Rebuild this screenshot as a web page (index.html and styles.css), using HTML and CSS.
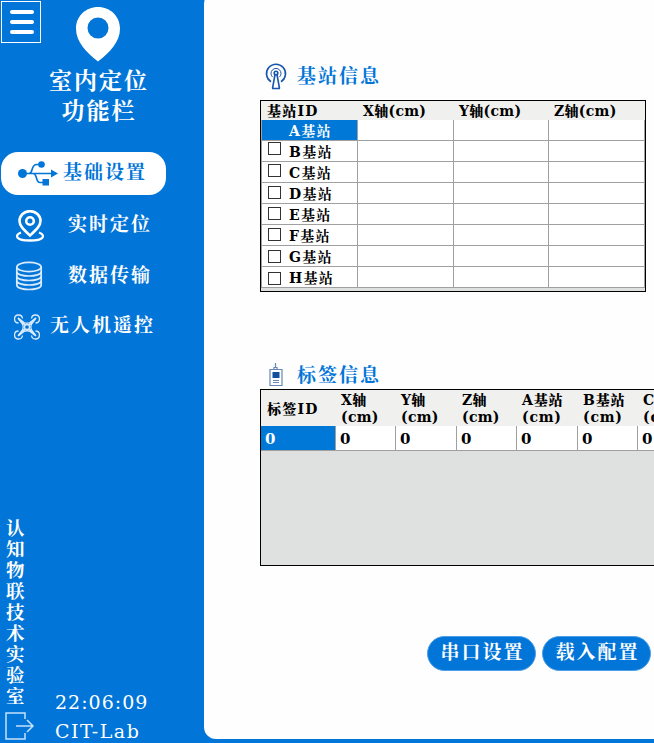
FILE: index.html
```html
<!DOCTYPE html>
<html lang="zh-CN">
<head>
<meta charset="utf-8">
<title>室内定位</title>
<link rel="stylesheet" href="styles.css">
</head>
<body>
<div class="app">
  <aside class="sidebar">
    <button class="menu" aria-label="菜单"><i></i><i></i><i></i></button>
    <svg class="pin" width="44" height="55" viewBox="0 0 44 55"><path fill="#fff" fill-rule="evenodd" d="M22 0C9.500 0 0 9.500 0 21.500C0 35 10 45 22 54.500C34 45 44 35 44 21.500C44 9.500 34.500 0 22 0ZM22 10.500a10.500 10.500 0 1 1 0 21a10.500 10.500 0 1 1 0-21Z"/></svg>
    <h1 class="brand"><span>室内定位</span><span>功能栏</span></h1>
    <nav class="nav">
      <a class="item active">
        <svg width="40" height="26" viewBox="0 0 40 26" fill="none" stroke="#0275d8" stroke-width="1.700"><path d="M4 12.500H34M11 12.500C16 12 12 3.500 19 3.500H23M15 12.500C20 13 17 21.500 22 21.500H26"/><g fill="#0275d8" stroke="none"><circle cx="4.500" cy="12.500" r="4.500"/><circle cx="23.500" cy="3.500" r="3.300"/><path d="M33 8.500L40 12.500L33 16.500ZM24.500 18h6.500v6.500h-6.500Z"/></g></svg>
        <span>基础设置</span>
      </a>
      <a class="item locate">
        <svg width="30" height="34" viewBox="0 0 30 34" fill="none" stroke="#fff" stroke-width="2.600"><path d="M15 25.500C9 20 4.500 16 4.500 11a10.300 9.700 0 0 1 21 0C25.500 16 21 20 15 25.500Z"/><circle cx="15" cy="11" r="3.800"/><path stroke-width="2.300" d="M6 22.500C-1 25 .5 30.500 15 30.500S31 25 24 22.500"/></svg>
        <span>实时定位</span>
      </a>
      <a class="item data">
        <svg width="28" height="30" viewBox="0 0 28 30" fill="none" stroke="#d9ebff" stroke-width="1.700"><ellipse cx="14" cy="6" rx="12.200" ry="4.700"/><path d="M1.800 6V24C1.800 30 26.200 30 26.200 24V6M1.800 10.500C1.800 16.500 26.200 16.500 26.200 10.500M1.800 15C1.800 21 26.200 21 26.200 15M1.800 19.500C1.800 25.500 26.200 25.500 26.200 19.500"/></svg>
        <span>数据传输</span>
      </a>
      <a class="item drone">
        <svg width="26" height="26" viewBox="0 0 26 26" fill="none" stroke="#d9ebff" stroke-width="1.300"><path d="M8.500 4.500A4 4 0 1 0 4.500 9M17.500 4.500A4 4 0 1 1 21.500 9M8.500 21.500A4 4 0 1 1 4.500 17M17.500 21.500A4 4 0 1 0 21.500 17"/><path d="M4 4L10 8.500Q13 10 16 8.500L22 4L17.500 10Q16 13 17.500 16L22 22L16 17.500Q13 16 10 17.500L4 22L8.500 16Q10 13 8.500 10Z"/><path stroke-width="2" d="M5 5L11 11M21 5L15 11M5 21L11 15M21 21L15 15"/><circle cx="13" cy="13" r="2.500"/></svg>
        <span>无人机遥控</span>
      </a>
    </nav>
    <footer class="foot">
      <div class="rail">
        <div class="lab">认知物联技术实验室</div>
        <svg width="30" height="28" viewBox="0 0 30 28" fill="none" stroke="#c5e1fb" stroke-width="1.500"><path d="M20 7V1H1V27H20V21M11 14H28M22 8L28 14L22 20"/></svg>
      </div>
      <div class="status"><div>22:06:09</div><div class="cit">CIT-Lab</div></div>
    </footer>
  </aside>
  <main class="content">
    <section class="stations">
      <h2>
        <svg width="22" height="27" viewBox="0 0 22 27" fill="none" stroke="#1756ad" stroke-width="1.600"><path d="M6 18.800A9.500 9.500 0 1 1 16 18.800M10 11.500L7.500 25.500M12 11.500L14.500 25.500M7 25.500H15"/><path stroke-width="1" d="M7.500 14A5 5 0 1 1 14.500 14"/><circle cx="11" cy="10" r="1.800"/></svg>
        <span>基站信息</span>
      </h2>
      <div class="grid">
        <div class="row head"><b class="id">基站ID</b><b>X轴(cm)</b><b>Y轴(cm)</b><b>Z轴(cm)</b></div>
        <div class="row"><div class="name selected">A基站</div><div></div><div></div><div></div></div>
        <div class="row"><div class="name"><i></i>B基站</div><div></div><div></div><div></div></div>
        <div class="row"><div class="name"><i></i>C基站</div><div></div><div></div><div></div></div>
        <div class="row"><div class="name"><i></i>D基站</div><div></div><div></div><div></div></div>
        <div class="row"><div class="name"><i></i>E基站</div><div></div><div></div><div></div></div>
        <div class="row"><div class="name"><i></i>F基站</div><div></div><div></div><div></div></div>
        <div class="row"><div class="name"><i></i>G基站</div><div></div><div></div><div></div></div>
        <div class="row"><div class="name"><i></i>H基站</div><div></div><div></div><div></div></div>
      </div>
    </section>
    <section class="tags">
      <h2>
        <svg width="22" height="24" viewBox="0 0 22 24" fill="none" stroke="#6687b8" stroke-width="1.200"><path d="M5 6.500H17V22.500H5ZM9 6V4.500H12V6M10.500 4.500V0"/><path fill="#104e9e" stroke="none" d="M7.500 9h7v6h-7Z"/><path d="M8 17.500h6M8 19.500h6"/></svg>
        <span>标签信息</span>
      </h2>
      <div class="grid">
        <div class="row head"><b class="id">标签ID</b><b>X轴<br>(cm)</b><b>Y轴<br>(cm)</b><b>Z轴<br>(cm)</b><b>A基站<br>(cm)</b><b>B基站<br>(cm)</b><b>C基站<br>(cm)</b></div>
        <div class="row"><div class="selected">0</div><div>0</div><div>0</div><div>0</div><div>0</div><div>0</div><div>0</div></div>
      </div>
    </section>
    <div class="actions"><button>串口设置</button><button>载入配置</button></div>
  </main>
</div>
</body>
</html>
```

FILE: styles.css
```css
* { box-sizing: border-box; }
body { margin: 0; overflow: hidden; font-family: "DejaVu Serif", "Noto Serif CJK SC", "Noto Sans CJK SC", serif; }
button { border: 0; padding: 0; font: inherit; }
h1, h2 { margin: 0; }
svg { display: block; flex: none; }
.app { display: flex; width: 654px; height: 743px; background: #0275d8; overflow: hidden; }

.sidebar { width: 204px; flex: none; display: flex; flex-direction: column; color: #fff; }
.menu { width: 40px; height: 42px; margin: 1px 0 0 1px; border: 1px solid #fff; background: none; display: flex; flex-direction: column; gap: 6px; padding: 8px 0 0 8px; }
.menu i { width: 24px; height: 4px; border-radius: 2px; background: #fff; }
.pin { margin: -36px 0 0 76px; }
.brand { width: 198px; margin-top: 4px; font-size: 23px; line-height: 30px; font-weight: 700; letter-spacing: 2px; text-align: center; display: flex; flex-direction: column; }
.nav { margin-top: 26px; }
.item { height: 51px; display: flex; align-items: center; font-size: 19px; font-weight: 700; letter-spacing: 2px; line-height: 28px; white-space: nowrap; }
.item.active { width: 165px; height: 43px; margin-left: 1px; border-radius: 17px; background: #fff; color: #0275d8; padding-left: 17px; gap: 5px; }
.item.active span { margin-top: -4px; }
.locate { margin-top: 3px; padding-left: 15px; gap: 23px; }
.locate svg { margin-top: 7px; }
.data { padding-left: 15px; gap: 25px; }
.data svg { margin-top: 3px; }
.item.drone { height: 50px; padding-left: 14px; gap: 10px; }
.drone svg { margin-top: 3px; }
.foot { margin-top: auto; display: flex; align-items: flex-end; }
.rail { width: 55px; padding: 0 0 3px 5px; }
.lab { width: 20px; padding-left: 1px; font-size: 18.500px; line-height: 21px; font-weight: 700; word-break: break-all; margin-bottom: 5px; }
.status { font-size: 19px; line-height: 29px; letter-spacing: 1px; margin-bottom: -3px; white-space: nowrap; }
.cit { letter-spacing: 1.500px; }

.content { flex: 1; min-width: 0; height: 747px; margin-top: -8px; padding: 68px 0 0 56px; background: #fefefe; border-radius: 12px 0 0 12px; overflow: hidden; }
h2 { height: 32px; display: flex; align-items: center; gap: 10px; padding-left: 5px; color: #0275d8; font-size: 19px; line-height: 28px; letter-spacing: 2px; }
.grid { border: 1px solid #000; background: #dfe1e0; font-size: 14px; font-weight: 700; color: #000; }
.row { display: grid; }
.row > div { background: #fff; border: solid #a0a0a0; border-width: 0 1px 1px 0; padding-left: 4px; }
.row > .selected { background: #0078d7; color: #fff; }
.head { background: #f0f0ee; }
.head b { padding-left: 5px; white-space: nowrap; letter-spacing: .3px; }
.head .id { padding-left: 6px; letter-spacing: 1.200px; }
.stations .grid { width: 386px; height: 192px; margin-top: 8px; }
.stations .row { grid-template: 21px / 97px 96px 95px 96px; height: 21px; }
.stations .head { height: 19px; line-height: 21px; }
.stations .row .name { border-left: 1px solid #a0a0a0; position: relative; padding-left: 27px; line-height: 22px; letter-spacing: 1.300px; }
.name i { position: absolute; left: 6px; top: 1px; width: 13px; height: 13px; border: 1px solid #333; background: #fff; }
.row:nth-child(4) i { top: 2px; }
.row:nth-child(n+5) i { top: 3px; }
.row:nth-child(8) i { top: 4px; }
.row:nth-child(9) i { top: 5px; }
.tags { margin-top: 67px; }
.tags .grid { width: 510px; height: 177px; margin-top: -2px; }
.tags .row { grid-template-columns: 75px 60px 61px 60px 61px 60px 61px; height: 25px; }
.tags .head { height: 36px; line-height: 17px; align-items: center; padding-top: 2px; }
.tags .head b:nth-child(n+5) { letter-spacing: .8px; }
.tags .row > div { line-height: 26px; height: 25px; padding-left: 4px; font-size: 15px; }
.actions { display: flex; gap: 6px; margin: 70px 0 0 167px; }
.actions button { width: 109px; height: 35px; flex: none; border: 1px solid #4b9ee8; border-radius: 18px; background: #0275d8; color: #fff; font-size: 19px; line-height: 26px; font-weight: 700; letter-spacing: 2px; padding: 0 0 3px 2px; }
```
